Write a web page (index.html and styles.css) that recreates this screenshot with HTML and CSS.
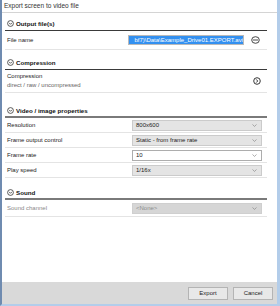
FILE: index.html
```html
<!DOCTYPE html>
<html lang="en">
<head>
  <meta charset="UTF-8" />
  <title>Export screen to video file</title>
  <link rel="stylesheet" href="styles.css">
</head>
<body>
  <div class="window">
    <div class="titlebar">Export screen to video file</div>

    <div class="content">
      <!-- Output -->
      <section class="sec sec-output">
        <div class="sec-head">
          <svg class="toggle" viewBox="0 0 7 7"><circle cx="3.5" cy="3.5" r="2.9"/><polyline points="2.1,2.9 3.5,4.3 4.9,2.9"/></svg>
          <span>Output file(s)</span>
        </div>
        <div class="row row-file">
          <span class="label">File name</span>
          <div class="file-input"><span class="sel">bf7)\Data\Example_Drive01.EXPORT.avi</span></div>
          <svg class="minus-icon" viewBox="0 0 9 8"><ellipse cx="4.5" cy="4" rx="3.8" ry="3.3"/><line x1="2" y1="4" x2="7" y2="4"/></svg>
        </div>
      </section>

      <!-- Compression -->
      <section class="sec sec-compression">
        <div class="sec-head">
          <svg class="toggle" viewBox="0 0 7 7"><circle cx="3.5" cy="3.5" r="2.9"/><polyline points="2.1,2.9 3.5,4.3 4.9,2.9"/></svg>
          <span>Compression</span>
        </div>
        <div class="row row-compression">
          <div class="label">
            <div>Compression</div>
            <div class="sub">direct / raw / uncompressed</div>
          </div>
          <svg class="go-icon" viewBox="0 0 8 8"><circle cx="4" cy="4" r="3.3"/><polyline points="3.2,2.4 4.7,4 3.2,5.6"/></svg>
        </div>
      </section>

      <!-- Video -->
      <section class="sec sec-video">
        <div class="sec-head">
          <svg class="toggle" viewBox="0 0 7 7"><circle cx="3.5" cy="3.5" r="2.9"/><polyline points="2.1,2.9 3.5,4.3 4.9,2.9"/></svg>
          <span>Video / image properties</span>
        </div>
        <div class="row">
          <span class="label">Resolution</span>
          <div class="select">800x600<svg class="arrow" viewBox="0 0 5 3"><polyline points="0.5,0.5 2.5,2.4 4.5,0.5"/></svg></div>
        </div>
        <div class="row">
          <span class="label">Frame output control</span>
          <div class="select">Static - from frame rate<svg class="arrow" viewBox="0 0 5 3"><polyline points="0.5,0.5 2.5,2.4 4.5,0.5"/></svg></div>
        </div>
        <div class="row">
          <span class="label">Frame rate</span>
          <div class="select editable">10<svg class="arrow" viewBox="0 0 5 3"><polyline points="0.5,0.5 2.5,2.4 4.5,0.5"/></svg></div>
        </div>
        <div class="row">
          <span class="label">Play speed</span>
          <div class="select">1/16x<svg class="arrow" viewBox="0 0 5 3"><polyline points="0.5,0.5 2.5,2.4 4.5,0.5"/></svg></div>
        </div>
      </section>

      <!-- Sound -->
      <section class="sec sec-sound">
        <div class="sec-head">
          <svg class="toggle" viewBox="0 0 7 7"><circle cx="3.5" cy="3.5" r="2.9"/><polyline points="2.1,2.9 3.5,4.3 4.9,2.9"/></svg>
          <span>Sound</span>
        </div>
        <div class="row row-disabled">
          <span class="label">Sound channel</span>
          <div class="select disabled">&lt;None&gt;<svg class="arrow" viewBox="0 0 5 3"><polyline points="0.5,0.5 2.5,2.4 4.5,0.5"/></svg></div>
        </div>
      </section>
    </div>

    <div class="footer">
      <button>Export</button>
      <button>Cancel</button>
    </div>
  </div>
</body>
</html>
```

FILE: styles.css
```css
body {
  margin: 0;
  font-family: "Liberation Sans", Arial, sans-serif;
  font-size: 6px;
  color: #222;
  background: #fff;
}
.window {
  width: 280px;
  height: 306px;
  box-sizing: border-box;
  display: flex;
  flex-direction: column;
  border-left: 2px solid #6f8bb0;
  border-right: 3px solid #b3cdea;
  border-bottom: 2px solid #b3cdea;
}
.titlebar {
  height: 12px;
  line-height: 12px;
  padding-left: 2px;
  font-size: 6.5px;
  color: #333;
  border-bottom: 1px solid #d4d4d4;
}
.content {
  flex: 1;
  padding: 4px 10px 0 3px;
}
.sec-output { margin-top: 0; }
.sec-compression { margin-top: 6px; }
.sec-video { margin-top: 11px; }
.sec-sound { margin-top: 8px; }
.sec-head {
  height: 13px;
  display: flex;
  align-items: center;
  gap: 2px;
  padding-left: 2px;
  font-weight: bold;
  font-size: 6.2px;
  color: #111;
  border-bottom: 1px solid #3a3a3a;
}
.sec-video .sec-head,
.sec-sound .sec-head {
  border-bottom: 2px solid #7a7a7a;
  height: 12px;
}
.toggle {
  width: 7px;
  height: 7px;
  fill: none;
  stroke: #333;
  stroke-width: 0.8;
}
.row {
  height: 14px;
  display: flex;
  align-items: center;
  border-bottom: 1px solid #e4e4e4;
}
.label {
  width: 125px;
  padding-left: 2px;
  flex-shrink: 0;
}
.row-file {
  height: 18px;
}
.row-file .label {
  width: 121px;
}
.file-input {
  width: 114px;
  height: 8px;
  border: 1px solid #b9b9b9;
  display: flex;
  overflow: hidden;
  white-space: nowrap;
  line-height: 8px;
}
.sel {
  flex: 1;
  text-align: right;
  background: #3390f0;
  color: #fff;
}
.minus-icon {
  width: 9px;
  height: 8px;
  margin-left: 7px;
  fill: none;
  stroke: #333;
  stroke-width: 0.9;
}
.row-compression {
  height: 22px;
  justify-content: space-between;
}
.row-compression .label {
  line-height: 9px;
}
.sub {
  color: #666;
}
.go-icon {
  width: 8px;
  height: 8px;
  margin-right: 6px;
  fill: none;
  stroke: #222;
  stroke-width: 0.9;
}
.select {
  flex: 1;
  height: 9px;
  line-height: 9px;
  margin-right: 5px;
  padding-left: 3px;
  background: #e4e4e4;
  border: 1px solid #cbcbcb;
  display: flex;
  justify-content: space-between;
  align-items: center;
  color: #222;
}
.select.editable {
  background: #fff;
  border-color: #adadad;
}
.select.disabled {
  background: #d6d6d6;
  border-color: #cfcfcf;
  color: #8d8d8d;
}
.arrow {
  width: 5px;
  height: 3px;
  margin-right: 4px;
  fill: none;
  stroke: #888;
  stroke-width: 0.7;
}
.row-disabled {
  height: 16px;
}
.row-disabled .label {
  color: #8a8a8a;
}
.footer {
  height: 22px;
  background: #d9d9d9;
  display: flex;
  justify-content: flex-end;
  align-items: center;
  gap: 5px;
  padding-right: 4px;
}
.footer button {
  width: 40px;
  height: 13px;
  padding: 0;
  font-family: "Liberation Sans", Arial, sans-serif;
  font-size: 6px;
  color: #222;
  background: #e8e8e8;
  border: 1px solid #b4b4b4;
}
```
